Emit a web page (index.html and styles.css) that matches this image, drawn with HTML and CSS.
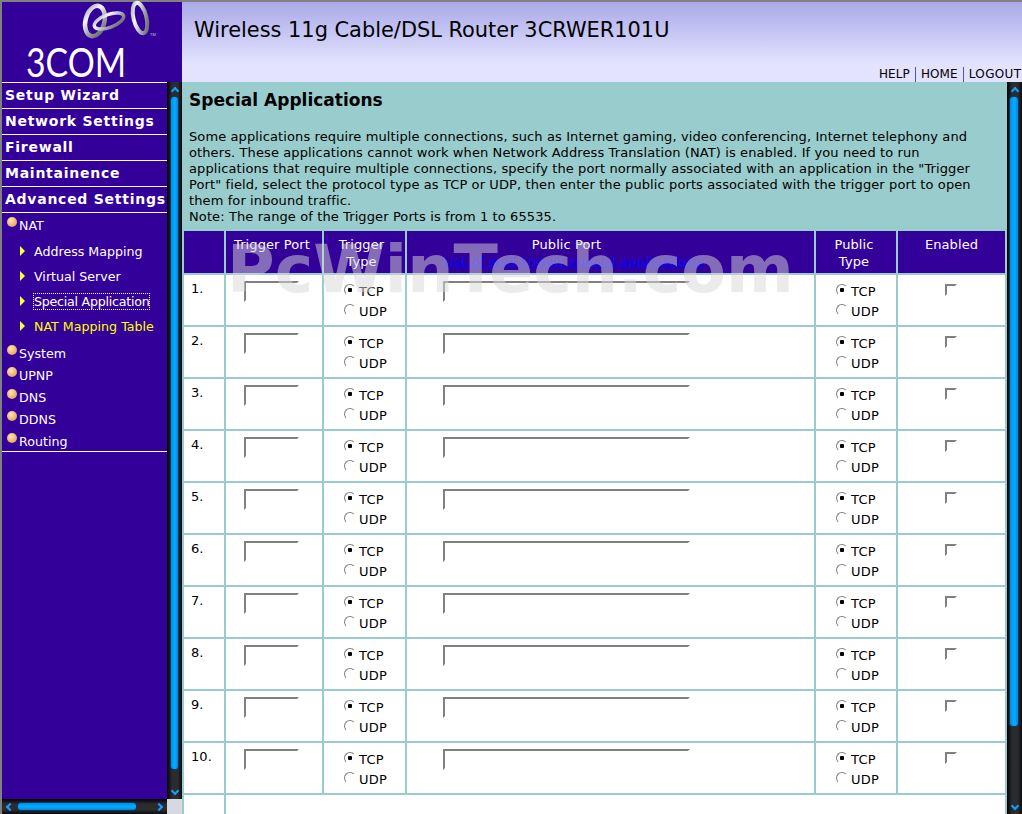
FILE: index.html
```html
<!DOCTYPE html>
<html lang="en">
<head>
<meta charset="utf-8">
<title>Special Applications</title>
<link rel="stylesheet" href="styles.css">
</head>
<body>
<div class="page">
  <aside class="side">
    <div class="logo">
      <svg width="165" height="80" viewBox="2 0 165 80" class="logo-svg">
        <defs>
          <linearGradient id="silver" x1="0" y1="0" x2="1" y2="1">
            <stop offset="0" stop-color="#a4a4b0"/>
            <stop offset=".3" stop-color="#f6f6f8"/>
            <stop offset=".65" stop-color="#a0a0aa"/>
            <stop offset="1" stop-color="#5a5a66"/>
          </linearGradient>
        </defs>
        <ellipse cx="95" cy="21" rx="9.5" ry="15.5" transform="rotate(14 95 21)" fill="none" stroke="url(#silver)" stroke-width="4.5"/>
        <ellipse cx="109" cy="21" rx="15.5" ry="6.5" transform="rotate(-20 109 21)" fill="none" stroke="url(#silver)" stroke-width="3.5"/>
        <ellipse cx="140" cy="18" rx="6.5" ry="15.5" transform="rotate(-14 140 18)" fill="none" stroke="url(#silver)" stroke-width="4"/>
        <text x="150" y="36" class="tm">TM</text>
        <text x="26" y="77" class="brand" textLength="100" lengthAdjust="spacingAndGlyphs">3COM</text>
      </svg>
    </div>
    <div class="side-body">
      <nav class="nav">
        <a class="main">Setup Wizard</a>
        <a class="main">Network Settings</a>
        <a class="main">Firewall</a>
        <a class="main">Maintainence</a>
        <a class="main">Advanced Settings</a>
        <div class="tree">
          <div class="node"><span class="ball"></span>NAT</div>
          <div class="subs">
            <div class="sub"><span class="tri"></span>Address Mapping</div>
            <div class="sub"><span class="tri"></span>Virtual Server</div>
            <div class="sub"><span class="tri"></span><span class="focus">Special Application</span></div>
            <div class="sub active"><span class="tri"></span>NAT Mapping Table</div>
          </div>
          <div class="node"><span class="ball"></span>System</div>
          <div class="node"><span class="ball"></span>UPNP</div>
          <div class="node"><span class="ball"></span>DNS</div>
          <div class="node"><span class="ball"></span>DDNS</div>
          <div class="node"><span class="ball"></span>Routing</div>
        </div>
      </nav>
      <div class="vbar">
        <span class="arrow up"></span><span class="thumb"></span><span class="arrow down"></span>
      </div>
      <div class="hbar">
        <span class="arrow left"></span><span class="hthumb"></span><span class="arrow right"></span>
      </div>
      <div class="corner"></div>
    </div>
  </aside>
  <div class="main-col">
    <header class="top">
      <h1>Wireless 11g Cable/DSL Router 3CRWER101U</h1>
      <div class="links"><a>HELP</a><a>HOME</a><a>LOGOUT</a></div>
    </header>
    <div class="body-row">
      <main class="content">
        <h2>Special Applications</h2>
        <p>Some applications require multiple connections, such as Internet gaming, video conferencing, Internet telephony and others. These applications cannot work when Network Address Translation (NAT) is enabled. If you need to run applications that require multiple connections, specify the port normally associated with an application in the "Trigger Port" field, select the protocol type as TCP or UDP, then enter the public ports associated with the trigger port to open them for inbound traffic.<br>Note: The range of the Trigger Ports is from 1 to 65535.</p>
        <table class="grid">
          <colgroup><col class="c1"><col class="c2"><col class="c3"><col class="c4"><col class="c5"><col class="c6"></colgroup>
          <thead>
            <tr>
              <th></th><th class="shift">Trigger Port</th><th class="shift-more">Trigger Type</th>
              <th class="port-head"><div class="port-box">Public Port<a class="list-link">List of well known special applications</a></div></th>
              <th class="shift">Public Type</th><th>Enabled</th>
            </tr>
          </thead>
          <tbody id="rows"></tbody>
        </table>
        <div class="watermark">PcWinTech.com</div>
      </main>
      <div class="vbar page-bar">
        <span class="arrow up"></span><span class="thumb"></span><span class="arrow down"></span>
      </div>
    </div>
  </div>
</div>
<script src="rows.js"></script>
</body>
</html>
```
FILE: rows.js
```js
var radios = function (name) {
  return '<label class="opt"><input type="radio" name="' + name + '" checked>TCP</label>' +
         '<label class="opt"><input type="radio" name="' + name + '">UDP</label>';
};
var html = '';
for (var i = 1; i <= 10; i++) {
  html += '<tr><td class="num">' + i + '.</td>' +
    '<td class="ctr"><input class="tx short-in" type="text"></td>' +
    '<td class="radios">' + radios('t' + i) + '</td>' +
    '<td class="ctr"><input class="tx long-in" type="text"></td>' +
    '<td class="radios">' + radios('p' + i) + '</td>' +
    '<td class="ctr"><input class="chk" type="checkbox"></td></tr>';
}
html += '<tr class="last"><td></td><td colspan="5"></td></tr>';
document.getElementById('rows').innerHTML = html;
```
FILE: styles.css
```css
* { box-sizing: border-box; }
html, body { margin: 0; height: 100%; overflow: hidden; background: #fff; }
body { font-family: "DejaVu Sans", Verdana, sans-serif; font-size: 13px; color: #000; }
.page { display: grid; grid-template-columns: 182px 840px; height: 814px; }

/* left frame */
.side { display: flex; flex-direction: column; background: #330099; border-left: 2px solid #808080; border-top: 2px solid #808080; height: 814px; }
.logo { height: 80px; flex: none; }
.logo-svg { display: block; margin-top: -2px; overflow: visible; }
.brand { font-family: "Lato", "Open Sans", sans-serif; font-weight: 400; font-size: 41px; fill: #fff; }
.tm { font-family: "Liberation Sans", sans-serif; font-size: 4px; fill: #ccc; }
.side-body { flex: 1; min-height: 0; display: grid; grid-template-columns: 165px 15px; grid-template-rows: 717px 15px; }
.nav { overflow: hidden; }
.main { display: block; height: 26px; border-top: 1px solid #fff; padding-left: 3px; color: #fff; font-weight: 700; font-size: 14px; line-height: 25px; letter-spacing: .74px; white-space: nowrap; }
.tree { border-top: 1px solid #fff; border-bottom: 1px solid #fff; color: #fff; font-size: 12.65px; height: 240px; padding-top: 2px; }
.node { height: 22px; line-height: 22px; position: relative; padding-left: 17px; }
.ball { position: absolute; left: 5px; top: 2px; width: 10px; height: 10px; border-radius: 50%; background: radial-gradient(circle at 40% 35%, #ffe6b0, #e8a860 70%, #a87850); }
.subs { padding: 2px 0 4px; }
.sub { height: 25px; line-height: 25px; padding-left: 32px; position: relative; white-space: nowrap; }
.sub.active { color: #ffff00; }
.tri { position: absolute; left: 18px; top: 7px; border-left: 5px solid #ffff33; border-top: 5px solid transparent; border-bottom: 5px solid transparent; }
.focus { outline: 1px dotted #fff; outline-offset: 0; letter-spacing: -.25px; }

/* scrollbars */
.vbar { position: relative; background: linear-gradient(90deg, #0c0c10, #2b2c30 30%, #2b2c30 70%, #0c0c10); width: 15px; border-left: 1px solid #000; }
.thumb { position: absolute; left: 3px; top: 15px; bottom: 30px; width: 7px; background: linear-gradient(90deg, #0a86de, #00a8ff 40%, #00a8ff 70%, #0a7ccc); border-radius: 3px; box-shadow: 0 0 0 1px #0b3a5c; }
.page-bar .thumb { left: 2px; width: 8px; bottom: 88px; }
.hbar { position: relative; background: linear-gradient(#0c0c10, #2b2c30 30%, #2b2c30 70%, #0c0c10); border-top: 1px solid #000; }
.hthumb { position: absolute; left: 16px; right: 31px; top: 3px; height: 7px; background: linear-gradient(#0a86de, #00a8ff 40%, #00a8ff 70%, #0a7ccc); border-radius: 3px; box-shadow: 0 0 0 1px #0b3a5c; }
.corner { background: #d8d8e0; }
.arrow { position: absolute; width: 6px; height: 6px; border: solid #1a9cff; border-width: 2px 0 0 2px; }
.arrow.up { left: 3.5px; top: 6px; transform: rotate(45deg); }
.arrow.down { left: 3.5px; bottom: 5px; transform: rotate(225deg); }
.arrow.left { left: 5px; top: 3.5px; transform: rotate(-45deg); }
.arrow.right { right: 5px; top: 3.5px; transform: rotate(135deg); }

/* right column */
.main-col { display: flex; flex-direction: column; min-width: 0; height: 814px; }
.top { height: 82px; flex: none; position: relative; border-top: 2px solid #808080; background: linear-gradient(#a9a9e8 0, #e3e3ff 62px); padding: 15px 0 0 12px; }
h1 { margin: 0; font-weight: 400; font-size: 20.9px; line-height: 26px; white-space: nowrap; }
.links { position: absolute; left: 697px; bottom: 0; display: flex; font-size: 12px; line-height: 15px; height: 15px; white-space: nowrap; letter-spacing: .1px; }
.links a { padding: 0 5px 0 0; margin-right: 5px; border-right: 1px solid #5555aa; }
.links a:last-child { border: 0; margin: 0; padding: 0; letter-spacing: .35px; }
.body-row { flex: 1; min-height: 0; display: grid; grid-template-columns: 825px 15px; }
.content { position: relative; background: #99cccc; overflow: hidden; height: 732px; }
h2 { margin: 0; padding: 8px 0 0 7px; font-size: 17px; line-height: 20px; font-weight: 700; }
.content p { margin: 19px 0 0; padding: 0 17px 0 7px; font-size: 13px; line-height: 16px; letter-spacing: .105px; }

/* table */
.grid { border-collapse: separate; border-spacing: 2px; table-layout: fixed; width: 825px; margin-top: 4px; letter-spacing: .1px; }
.c1 { width: 40px; } .c2 { width: 96px; } .c3 { width: 81px; } .c4 { width: 407px; } .c5 { width: 80px; } .c6 { width: 107px; }
.grid th { background: #330099; color: #fff; font-weight: 400; font-size: 13px; line-height: 17px; height: 42px; padding: 5px 8px 0; vertical-align: top; text-align: center; }
.grid th.shift { padding-left: 4px; padding-right: 8px; }
.grid th.shift-more { padding-left: 4px; padding-right: 10px; }
.grid th.port-head { padding-left: 36px; padding-right: 0; }
.port-box { width: 247px; }
.list-link { display: block; color: #0000ff; text-decoration: underline; font-size: 13px; letter-spacing: .3px; white-space: nowrap; }
.grid td { background: #fff; height: 50px; padding: 0; vertical-align: top; }
.grid tr.last td { height: 30px; }
.num { padding: 6px 0 0 7px !important; line-height: 16px; }
.ctr { text-align: center; }
.tx { display: block; height: 21px; padding: 0; border: 2px solid; border-color: #808080 #fff #fff #808080; background: #fff; outline: 0; margin-top: 6px; }
.short-in { width: 55px; margin-left: 18px; }
.long-in { width: 247px; margin-left: 36px; }
.radios { padding: 6px 0 0 20px !important; }
.opt { display: flex; align-items: center; height: 20px; font-size: 13px; letter-spacing: .2px; }
.opt input { appearance: none; width: 12px; height: 12px; margin: 0 3px 0 0; border-radius: 50%; border: 1.5px solid; border-color: #808080 #fff #fff #808080; position: relative; top: -1px; background: #fff; }
.opt input:checked { background: radial-gradient(circle, #000 0 2px, #fff 2.5px); }
.chk { appearance: none; display: block; margin: 9px 0 0 47px; width: 12px; height: 12px; border: 2px solid; border-color: #808080 #fff #fff #808080; background: #fff; }

.watermark { position: absolute; left: 45px; top: 152px; font-family: "DejaVu Sans", sans-serif; font-weight: 700; font-size: 65px; line-height: 72px; color: rgba(216, 216, 216, .5); white-space: nowrap; pointer-events: none; }
```
